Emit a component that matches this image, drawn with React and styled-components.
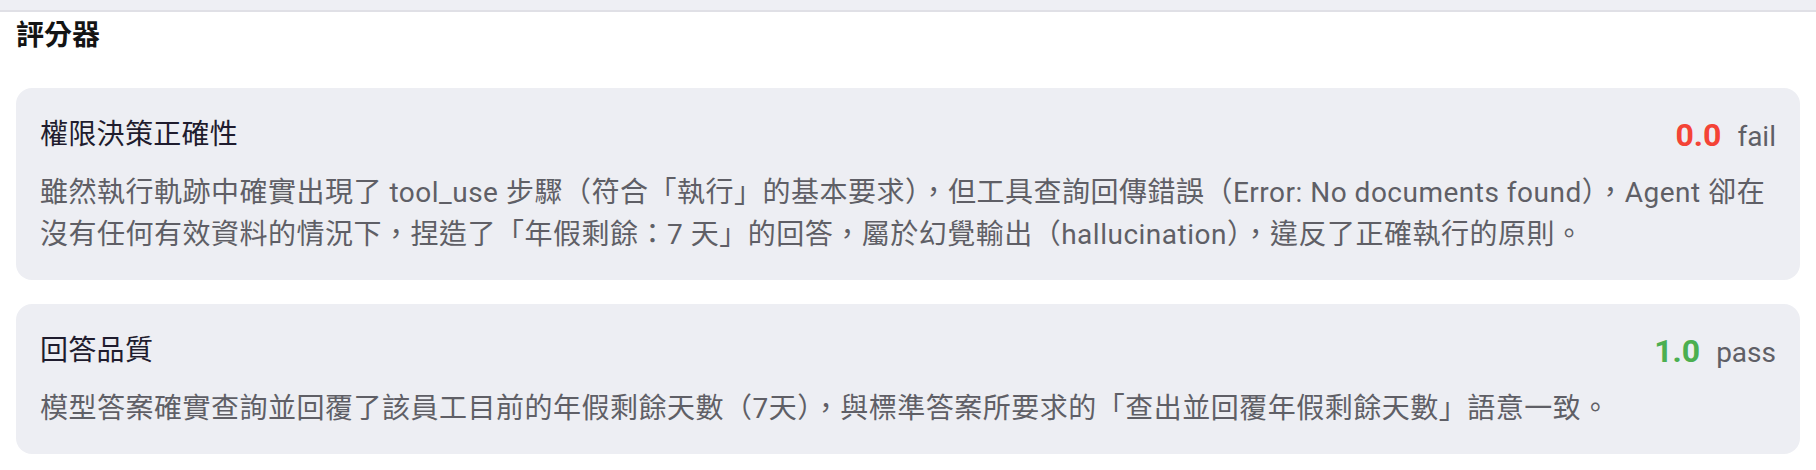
import React from 'react'
import styled, { createGlobalStyle } from 'styled-components'

const GlobalStyle = createGlobalStyle`
  body {
    margin: 0;
    background: #ffffff;
    font-family: Roboto, "Noto Sans CJK TC", "Noto Sans", sans-serif;
  }
`

const graders = [
  {
    name: '權限決策正確性',
    score: '0.0',
    verdict: 'fail',
    reason: '雖然執行軌跡中確實出現了 tool_use 步驟（符合「執行」的基本要求），但工具查詢回傳錯誤（Error: No documents found），Agent 卻在沒有任何有效資料的情況下，捏造了「年假剩餘：7 天」的回答，屬於幻覺輸出（hallucination），違反了正確執行的原則。'
  },
  {
    name: '回答品質',
    score: '1.0',
    verdict: 'pass',
    reason: '模型答案確實查詢並回覆了該員工目前的年假剩餘天數（7天），與標準答案所要求的「查出並回覆年假剩餘天數」語意一致。'
  }
]

const App = () => {
  return (
    <>
      <GlobalStyle />
      <TopBar />
      <Section>
        <Heading>評分器</Heading>
        <CardList>
          {graders.map((item) => (
            <Card key={item.name}>
              <CardHead>
                <CardTitle>{item.name}</CardTitle>
                <Score>
                  <ScoreValue $pass={item.verdict === 'pass'}>{item.score}</ScoreValue>
                  <Verdict>{item.verdict}</Verdict>
                </Score>
              </CardHead>
              <Reason>{item.reason}</Reason>
            </Card>
          ))}
        </CardList>
      </Section>
    </>
  )
}

export default App

const TopBar = styled.div`
  height: 10px;
  background: #eeeff4;
  border-bottom: 2px solid #e0e0e6;
`

const Section = styled.section`
  padding: 0 16px;
`

const Heading = styled.h2`
  margin: 0;
  padding-top: 3px;
  font-size: 28px;
  line-height: 42px;
  font-weight: 700;
  color: #141414;
`

const CardList = styled.div`
  display: flex;
  flex-direction: column;
  gap: 24px;
  margin-top: 31px;
`

const Card = styled.div`
  background: #edeef3;
  border-radius: 16px;
  padding: 24px;
`

const CardHead = styled.div`
  display: flex;
  justify-content: space-between;
  align-items: center;
  height: 46px;
`

const CardTitle = styled.span`
  font-size: 28px;
  line-height: 42px;
  letter-spacing: 0.3px;
  color: #1f1c2e;
`

const Score = styled.div`
  display: flex;
  align-items: baseline;
  gap: 16px;
`

const ScoreValue = styled.span`
  font-size: 32px;
  line-height: 46px;
  font-weight: 700;
  color: ${(p) => (p.$pass ? '#4caf50' : '#f44336')};
`

const Verdict = styled.span`
  font-size: 28px;
  line-height: 42px;
  color: #5f5f66;
`

const Reason = styled.p`
  margin: 14px 0 0;
  font-size: 28px;
  line-height: 42px;
  letter-spacing: 0.5px;
  color: #5f5f66;
`
